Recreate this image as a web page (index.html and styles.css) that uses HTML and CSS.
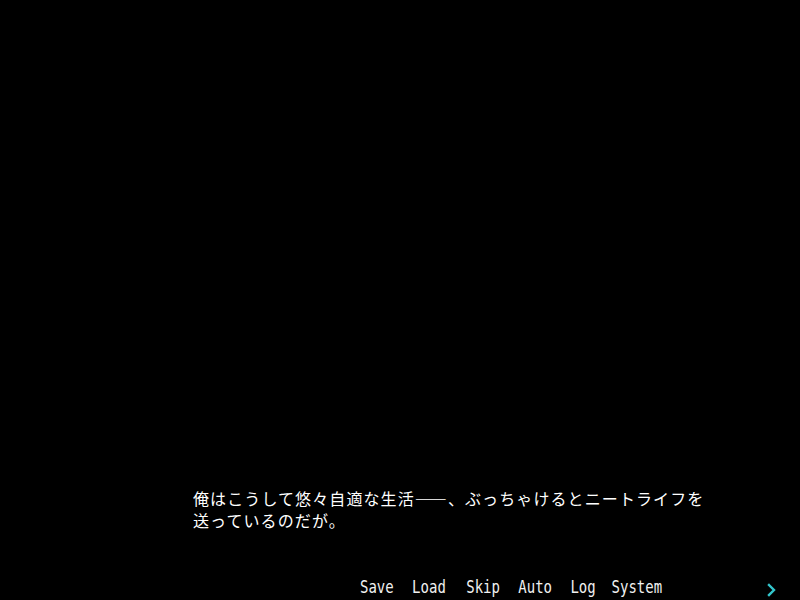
FILE: index.html
```html
<!DOCTYPE html>
<html lang="ja">
<head>
<meta charset="utf-8">
<link rel="stylesheet" href="styles.css">
</head>
<body>
<div class="screen">
  <div class="stage"></div>
  <div class="dialogue">
    <p class="line">俺はこうして悠々自適な生活――、ぶっちゃけるとニートライフを<br>送っているのだが。</p>
  </div>
  <div class="menu">
    <span class="item save">Save</span>
    <span class="item load">Load</span>
    <span class="item skip">Skip</span>
    <span class="item auto">Auto</span>
    <span class="item log">Log</span>
    <span class="item system">System</span>
    <span class="next">
      <svg width="10" height="14" viewBox="0 0 10 14"><path d="M2 2 L7 7 L2 12" fill="none" stroke="#33c6cc" stroke-width="2.4" stroke-linecap="square"/></svg>
    </span>
  </div>
</div>
</body>
</html>
```

FILE: styles.css
```css
html, body {
  margin: 0;
  padding: 0;
  background: #000;
}
.screen {
  width: 800px;
  height: 600px;
  display: flex;
  flex-direction: column;
  background: #000;
  color: #fff;
}
.stage {
  flex: 1;
}
.dialogue {
  padding-left: 193px;
  height: 88px;
}
.line {
  margin: 0;
  font-family: "Noto Sans CJK JP", sans-serif;
  font-size: 16px;
  letter-spacing: 1.1px;
  line-height: 22px;
  position: relative;
  top: -1px;
}
.menu {
  height: 24px;
  display: flex;
  align-items: center;
  padding-left: 360px;
  font-family: "DejaVu Sans Mono", monospace;
  font-size: 14px;
  color: #f0f0f0;
}
.item {
  display: inline-block;
  margin-right: 18.4px;
  transform: scaleY(1.3);
  transform-origin: 50% 75%;
}
.load { margin-right: 20.4px; }
.log { margin-right: 15.8px; }
.system { margin-right: 0; }
.next {
  margin-left: auto;
  margin-right: 23px;
  display: flex;
  padding-top: 4px;
}
```
